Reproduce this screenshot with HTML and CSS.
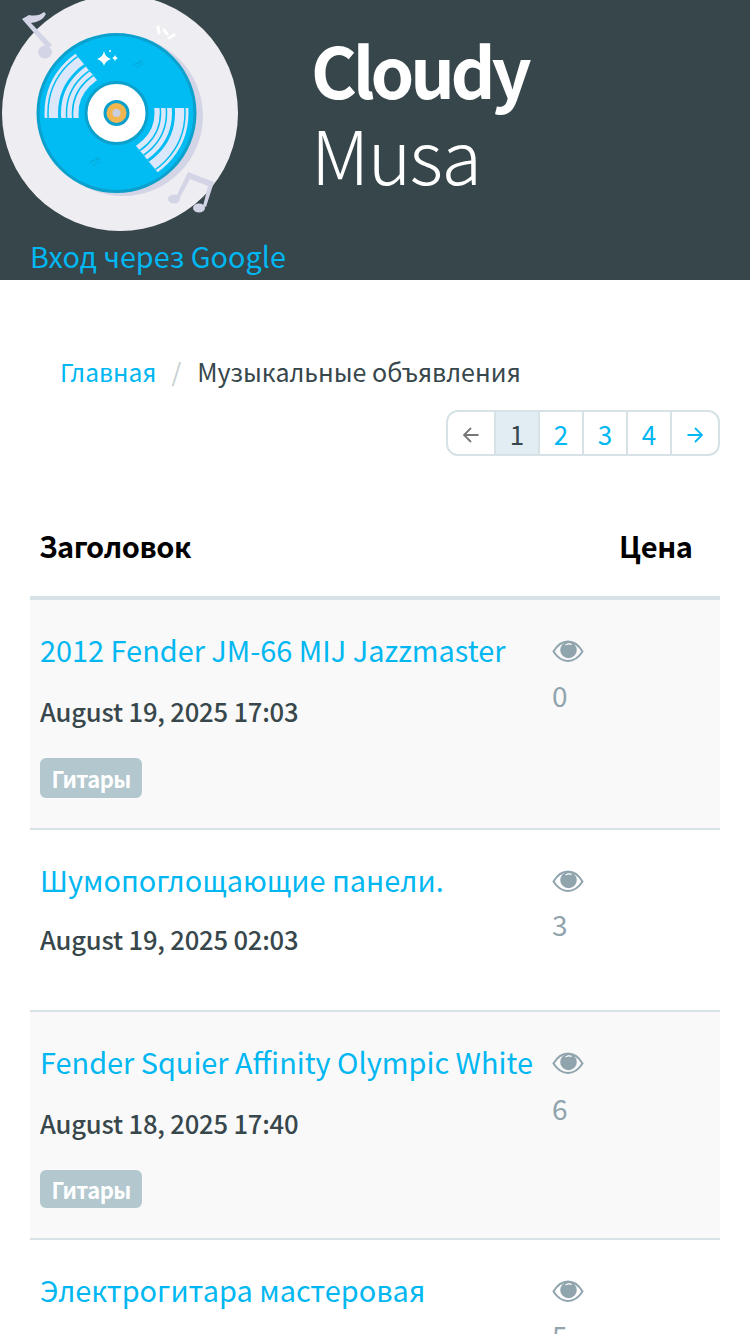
FILE: index.html
```html
<!DOCTYPE html>
<html lang="ru">
<head>
<meta charset="utf-8">
<title>Cloudy Musa</title>
<link rel="stylesheet" href="styles.css">
</head>
<body>
<svg class="defs" width="0" height="0" aria-hidden="true">
  <defs>
    <symbol id="eye" viewBox="0 0 32 24">
      <path d="M1.500 12.500C5 6.500 10 2.500 16 2.500S27 6.500 30.500 12.500C27 18 22 22 16 22S5 18 1.500 12.500Z" fill="none" stroke="currentColor" stroke-width="2"/>
      <circle cx="16.500" cy="11" r="8.300" fill="currentColor"/>
      <path d="M13.500 5.800a6 6 0 0 1 6-.5a8 8 0 0 0-6 .5Z" fill="#fff" stroke="#fff" stroke-width=".8"/>
    </symbol>
    <clipPath id="sector">
      <path d="M116.500 118H30V30H56L116.500 104Z"/>
    </clipPath>
    <g id="bands" clip-path="url(#sector)">
      <circle cx="116.500" cy="113" r="55" fill="none" stroke="#dbe7fb" stroke-width="34"/>
      <g fill="none" stroke="#00bcf2">
        <circle cx="116.500" cy="113" r="68.500" stroke-width="1.500"/>
        <circle cx="116.500" cy="113" r="57" stroke-width="3"/>
        <circle cx="116.500" cy="113" r="50" stroke-width="1.500"/>
        <circle cx="116.500" cy="113" r="44" stroke-width="1.500"/>
      </g>
    </g>
  </defs>
</svg>
<header class="site-header">
  <div class="brand">
    <svg class="logo" viewBox="0 0 250 240" width="250" height="240" aria-hidden="true">
      <circle cx="120" cy="113" r="118" fill="#eeedf2"/>
      <circle cx="123" cy="116" r="80" fill="#d3d5e6"/>
      <g fill="#d3d5e6">
        <path d="M22 19L29 15Q38 17 44 12L46 14Q42 22 31 23L52 45L48 49Z"/>
        <ellipse cx="45" cy="52" rx="7" ry="6.500"/>
        <path d="M188 172L214 182L206 207L203 206L208 186L190 179L178 201L175 199Z"/>
        <ellipse cx="174" cy="199" rx="6" ry="4.500"/>
        <ellipse cx="199" cy="208" rx="6" ry="4.500"/>
      </g>
      <circle cx="116.500" cy="113" r="78.500" fill="#00bcf2" stroke="#0ca0cd" stroke-width="3"/>
      <use href="#bands"/>
      <use href="#bands" transform="rotate(180 116.500 113)"/>
      <circle cx="116.500" cy="113" r="30.500" fill="#fff" stroke="#0ca0cd" stroke-width="3"/>
      <circle cx="116.500" cy="113" r="11.500" fill="#f2b650" stroke="#0ca0cd" stroke-width="3"/>
      <circle cx="116.500" cy="113" r="4" fill="#c9cfe0"/>
      <g fill="#fff">
        <path d="M104 51Q105 57 111 59Q105 61 104 66Q103 61 97 59Q103 57 104 51Z"/>
        <path d="M115 54Q115 57 118 58Q115 59 115 62Q115 59 112 58Q115 57 115 54Z"/>
        <circle cx="110" cy="51" r="1"/>
      </g>
      <g stroke="#fff" stroke-width="3" stroke-linecap="round" fill="none">
        <path d="M158 27L159 33"/>
        <path d="M164 30L167 34"/>
        <path d="M169 38L174 35"/>
      </g>
      <g stroke="#0ca0cd" stroke-width="1" opacity=".6" fill="none">
        <path d="M133 66L142 60M134 64L143 62M136 68L143 64"/>
        <path d="M90 163L99 157M91 161L100 159M93 166L100 161"/>
      </g>
    </svg>
    <h1 class="brand-name"><strong>Cloudy</strong><span>Musa</span></h1>
  </div>
  <a class="login" href="#">Вход через Google</a>
</header>

<main class="content">
  <nav class="breadcrumb">
    <a href="#">Главная</a>
    <span class="sep">/</span>
    <span class="current">Музыкальные объявления</span>
  </nav>
  <div class="pager-row">
    <ul class="pager">
      <li class="arrow-prev"><a href="#" aria-label="Назад"><svg class="arrow" viewBox="0 0 16 16"><path d="M15.500 8H1M8 1L1 8l7 7" fill="none" stroke="currentColor" stroke-width="1.800"/></svg></a></li>
      <li class="active"><a href="#">1</a></li>
      <li><a href="#">2</a></li>
      <li><a href="#">3</a></li>
      <li><a href="#">4</a></li>
      <li class="arrow-next"><a href="#" aria-label="Вперёд"><svg class="arrow" viewBox="0 0 16 16"><path d="M.5 8H15M8 1l7 7-7 7" fill="none" stroke="currentColor" stroke-width="1.800"/></svg></a></li>
    </ul>
  </div>
  <table class="listing">
    <thead>
      <tr><th class="col-title">Заголовок</th><th class="col-price">Цена</th></tr>
    </thead>
    <tbody>
      <tr class="odd first">
        <td><a class="item" href="#">2012 Fender JM-66 MIJ Jazzmaster</a><div class="date">August 19, 2025 17:03</div><span class="tag">Гитары</span></td>
        <td class="views"><svg class="eye"><use href="#eye"/></svg><div>0</div></td>
      </tr>
      <tr class="short">
        <td><a class="item" href="#">Шумопоглощающие панели.</a><div class="date">August 19, 2025 02:03</div></td>
        <td class="views"><svg class="eye"><use href="#eye"/></svg><div>3</div></td>
      </tr>
      <tr class="odd third">
        <td><a class="item" href="#">Fender Squier Affinity Olympic White</a><div class="date">August 18, 2025 17:40</div><span class="tag">Гитары</span></td>
        <td class="views"><svg class="eye"><use href="#eye"/></svg><div>6</div></td>
      </tr>
      <tr>
        <td><a class="item" href="#">Электрогитара мастеровая</a></td>
        <td class="views"><svg class="eye"><use href="#eye"/></svg><div>5</div></td>
      </tr>
    </tbody>
  </table>
</main>
</body>
</html>
```
FILE: styles.css
```css
* { box-sizing: border-box; }
html, body { margin: 0; padding: 0; }
body {
  height: 1334px;
  overflow: hidden;
  background: #fff;
  color: #37474b;
  font-family: "Noto Sans CJK SC", "Noto Sans", sans-serif;
  font-size: 28px;
}
a { color: #00b7f1; text-decoration: none; }
.defs { display: block; height: 0; }

.site-header {
  height: 280px;
  background: #37464a;
  overflow: hidden;
}
.brand { display: flex; height: 234px; }
.logo { display: block; flex: none; }
.brand-name {
  margin: 28px 0 0 61px;
  font-size: 74px;
  font-weight: 300;
  line-height: 87px;
  letter-spacing: -1.600px;
  color: #fff;
}
.brand-name strong {
  display: block;
  font-size: 70px;
  line-height: 81px;
  font-weight: 700;
  letter-spacing: -4.200px;
}
.brand-name span { display: block; }
.login {
  display: block;
  margin-left: 30px;
  font-size: 28.800px;
  line-height: 44px;
}

.content { padding: 70px 30px 0; }
.breadcrumb {
  display: flex;
  padding-left: 30px;
  height: 42px;
  line-height: 42px;
  font-size: 25px;
}
.breadcrumb a { font-size: 24.600px; }
.sep { color: #c4cfd2; margin: 0 16px 0 15px; }
.pager-row { display: flex; justify-content: flex-end; margin-top: 18px; }
.pager {
  display: flex;
  margin: 0;
  padding: 0;
  list-style: none;
  height: 46px;
  border: 2px solid #d6e2e5;
  border-radius: 12px;
  overflow: hidden;
}
.pager li { width: 44px; border-left: 2px solid #d6e2e5; }
.pager li:first-child { border-left: 0; width: 46px; }
.pager li:last-child { width: 48px; }
.pager a {
  display: flex;
  justify-content: center;
  align-items: center;
  height: 42px;
  font-size: 26px;
}
.pager .active { background: #e1edf3; }
.pager .active a { color: #37474b; }
.pager .arrow-prev a { color: #777; }
.arrow { width: 16px; height: 16px; display: block; margin-top: 4px; }

.listing {
  width: 690px;
  margin-top: 44px;
  border-collapse: separate;
  border-spacing: 0;
  table-layout: fixed;
}
.listing th {
  height: 100px;
  padding: 0 0 6px;
  font-size: 29px;
  font-weight: 700;
  letter-spacing: -.45px;
  color: #000;
  text-align: left;
  border-bottom: 4px solid #d6e2e5;
}
.col-title { width: 500px; padding-left: 9px !important; }
.col-price { padding-left: 89px !important; }
.listing td {
  vertical-align: top;
  padding: 26px 0 0 10px;
  border-bottom: 2px solid #d6e2e5;
}
.listing tr.odd td { background: #f9f9f9; }
.listing tr.first td { height: 230px; }
.listing tr.short td { height: 182px; }
.listing tr.third td { height: 228px; }
.item { display: block; font-size: 28.900px; line-height: 46px; white-space: nowrap; }
.date {
  margin-top: 20px;
  font-size: 25.600px;
  letter-spacing: -.2px;
  font-weight: 500;
  line-height: 38px;
  color: #37474b;
}
.short .date { margin-top: 18px; }
.tag {
  display: inline-block;
  margin-top: 28px;
  padding: 0 11.500px;
  height: 40px;
  line-height: 40px;
  border-radius: 6px;
  background: #b2c7ce;
  color: #fff;
  font-size: 22px;
  letter-spacing: -.6px;
  font-weight: 700;
}
.third .tag { height: 38px; line-height: 39px; }
.listing td.views { padding: 39px 0 0 22px; color: #90a4ae; line-height: 36px; }
.eye { display: block; width: 32px; height: 24px; color: #90a4ae; margin-bottom: 14px; }
.short .eye { margin-bottom: 13px; }
.third .eye { margin-bottom: 15px; }
```
